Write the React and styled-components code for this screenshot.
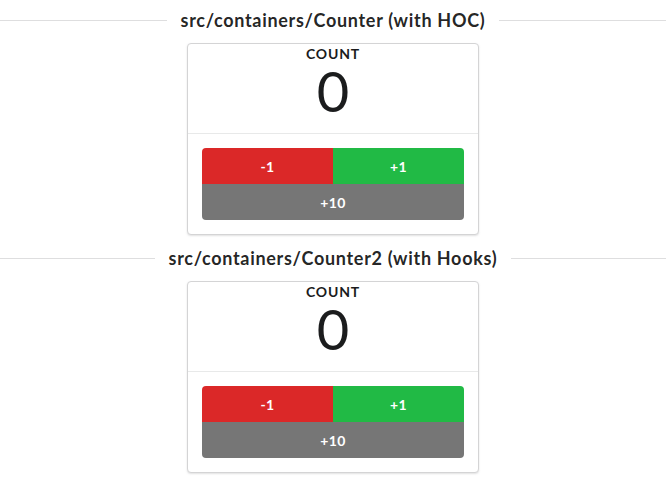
import React, { useState } from 'react';
import styled, { createGlobalStyle } from 'styled-components';

const GlobalStyle = createGlobalStyle`
  body {
    margin: 0;
    background: #fff;
    font-family: Lato, "Helvetica Neue", Arial, sans-serif;
    font-size: 14px;
    color: rgba(0, 0, 0, 0.87);
  }
`;

const Page = styled.div`
  display: flex;
  flex-direction: column;
  align-items: center;
  padding-right: 2px;
`;

// horizontal divider with the title in the middle
const DividerHeader = styled.h4`
  align-self: stretch;
  display: flex;
  align-items: center;
  gap: 14px;
  height: 40px;
  margin: 0 0 3px;
  font-size: 18px;
  line-height: 1;
  font-weight: 700;
  letter-spacing: 0.7px;
  color: rgba(0, 0, 0, 0.87);
  white-space: nowrap;

  &::before,
  &::after {
    content: '';
    flex: 1;
    height: 1px;
    background: rgba(34, 36, 38, 0.15);
  }
`;

const Card = styled.div`
  box-sizing: border-box;
  width: 292px;
  margin-bottom: 3px;
  background: #fff;
  border: 1px solid #d4d4d5;
  border-radius: 4px;
  box-shadow: 0 1px 2px 0 rgba(212, 212, 213, 0.7);
`;

const Content = styled.div`
  display: flex;
  flex-direction: column;
  align-items: center;
  padding: 3px 14px 14px;
`;

const Label = styled.div`
  font-size: 14px;
  line-height: 14px;
  font-weight: 700;
  letter-spacing: 0.8px;
  text-transform: uppercase;
  color: #1b1c1d;
  margin-bottom: 2px;
`;

const Value = styled.div`
  font-size: 56px;
  line-height: 56px;
  font-weight: 400;
  color: #1b1c1d;
`;

const Extra = styled.div`
  border-top: 1px solid rgba(34, 36, 38, 0.1);
  padding: 14px;
`;

const ButtonRow = styled.div`
  display: flex;
`;

const colors = {
  red: '#db2828',
  green: '#21ba45',
  grey: '#767676',
};

const radii = {
  left: '4px 0 0 0',
  right: '0 4px 0 0',
  bottom: '0 0 4px 4px',
};

const Button = styled.button`
  flex: 1;
  height: 36px;
  border: none;
  margin: 0;
  padding: 0 21px;
  background: ${p => colors[p.$color]};
  border-radius: ${p => radii[p.$corner]};
  color: #fff;
  font-family: Lato, "Helvetica Neue", Arial, sans-serif;
  font-size: 14px;
  font-weight: 700;
  letter-spacing: 0.4px;
  cursor: pointer;
`;

const WideButton = styled(Button)`
  display: block;
  width: 100%;
`;

function Counter({ title }) {
  const [count, setCount] = useState(0);

  return (
    <>
      <DividerHeader>{title}</DividerHeader>
      <Card>
        <Content>
          <Label>Count</Label>
          <Value>{count}</Value>
        </Content>
        <Extra>
          <ButtonRow>
            <Button $color="red" $corner="left" onClick={() => setCount(count - 1)}>-1</Button>
            <Button $color="green" $corner="right" onClick={() => setCount(count + 1)}>+1</Button>
          </ButtonRow>
          <WideButton $color="grey" $corner="bottom" onClick={() => setCount(count + 10)}>+10</WideButton>
        </Extra>
      </Card>
    </>
  );
}

export default function App() {
  return (
    <Page>
      <GlobalStyle />
      <Counter title="src/containers/Counter (with HOC)" />
      <Counter title="src/containers/Counter2 (with Hooks)" />
    </Page>
  );
}
